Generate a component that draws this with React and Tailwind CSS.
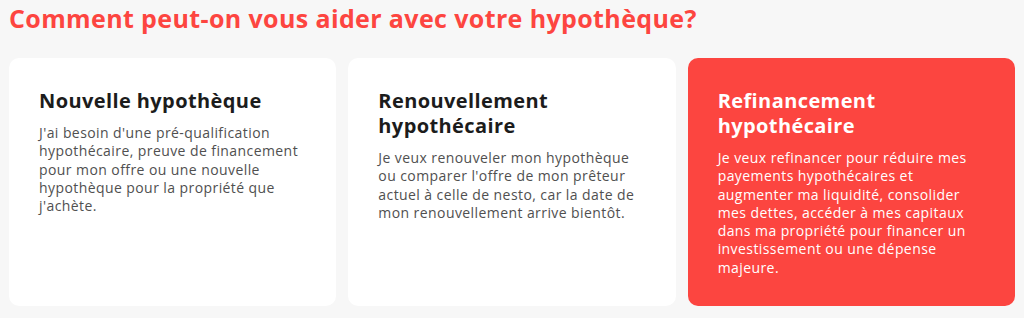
export default function App() {
  const cards = [
    {
      title: "Nouvelle hypothèque",
      text: "J'ai besoin d'une pré-qualification hypothécaire, preuve de financement pour mon offre ou une nouvelle hypothèque pour la propriété que j'achète.",
      active: false,
    },
    {
      title: "Renouvellement hypothécaire",
      text: "Je veux renouveler mon hypothèque ou comparer l'offre de mon prêteur actuel à celle de nesto, car la date de mon renouvellement arrive bientôt.",
      active: false,
    },
    {
      title: "Refinancement hypothécaire",
      text: "Je veux refinancer pour réduire mes payements hypothécaires et augmenter ma liquidité, consolider mes dettes, accéder à mes capitaux dans ma propriété pour financer un investissement ou une dépense majeure.",
      active: true,
    },
  ];

  return (
    <div
      className="w-full h-[318px] bg-[#f7f7f7] px-[9px] pt-[1px] overflow-hidden"
      style={{ fontFamily: '"Open Sans", "Noto Sans", sans-serif' }}
    >
      {/* Titre de la section */}
      <h1 className="text-[25px] leading-[34px] font-bold text-[#fd4540] tracking-[0.38px]">
        Comment peut-on vous aider avec votre hypothèque?
      </h1>

      {/* Cartes */}
      <div className="mt-[23px] grid grid-cols-3 gap-[12px]">
        {cards.map((c) => (
          <div
            key={c.title}
            className={
              c.active
                ? "h-[248px] rounded-[10px] bg-[#fc4540] pl-[30px] pr-[30px] pt-[30px]"
                : "h-[248px] rounded-[10px] bg-white pl-[30px] pr-[30px] pt-[30px]"
            }
          >
            <h2
              className={
                c.active
                  ? "text-[20px] leading-[25px] font-bold tracking-[0.4px] text-white"
                  : "text-[20px] leading-[25px] font-bold tracking-[0.4px] text-[#1c1c1c]"
              }
            >
              {c.title}
            </h2>
            <p
              className={
                c.active
                  ? "mt-[11px] text-[14px] leading-[18.3px] tracking-[0.42px] text-white"
                  : "mt-[11px] text-[14px] leading-[18.3px] tracking-[0.42px] text-[#505050]"
              }
            >
              {c.text}
            </p>
          </div>
        ))}
      </div>
    </div>
  );
}
